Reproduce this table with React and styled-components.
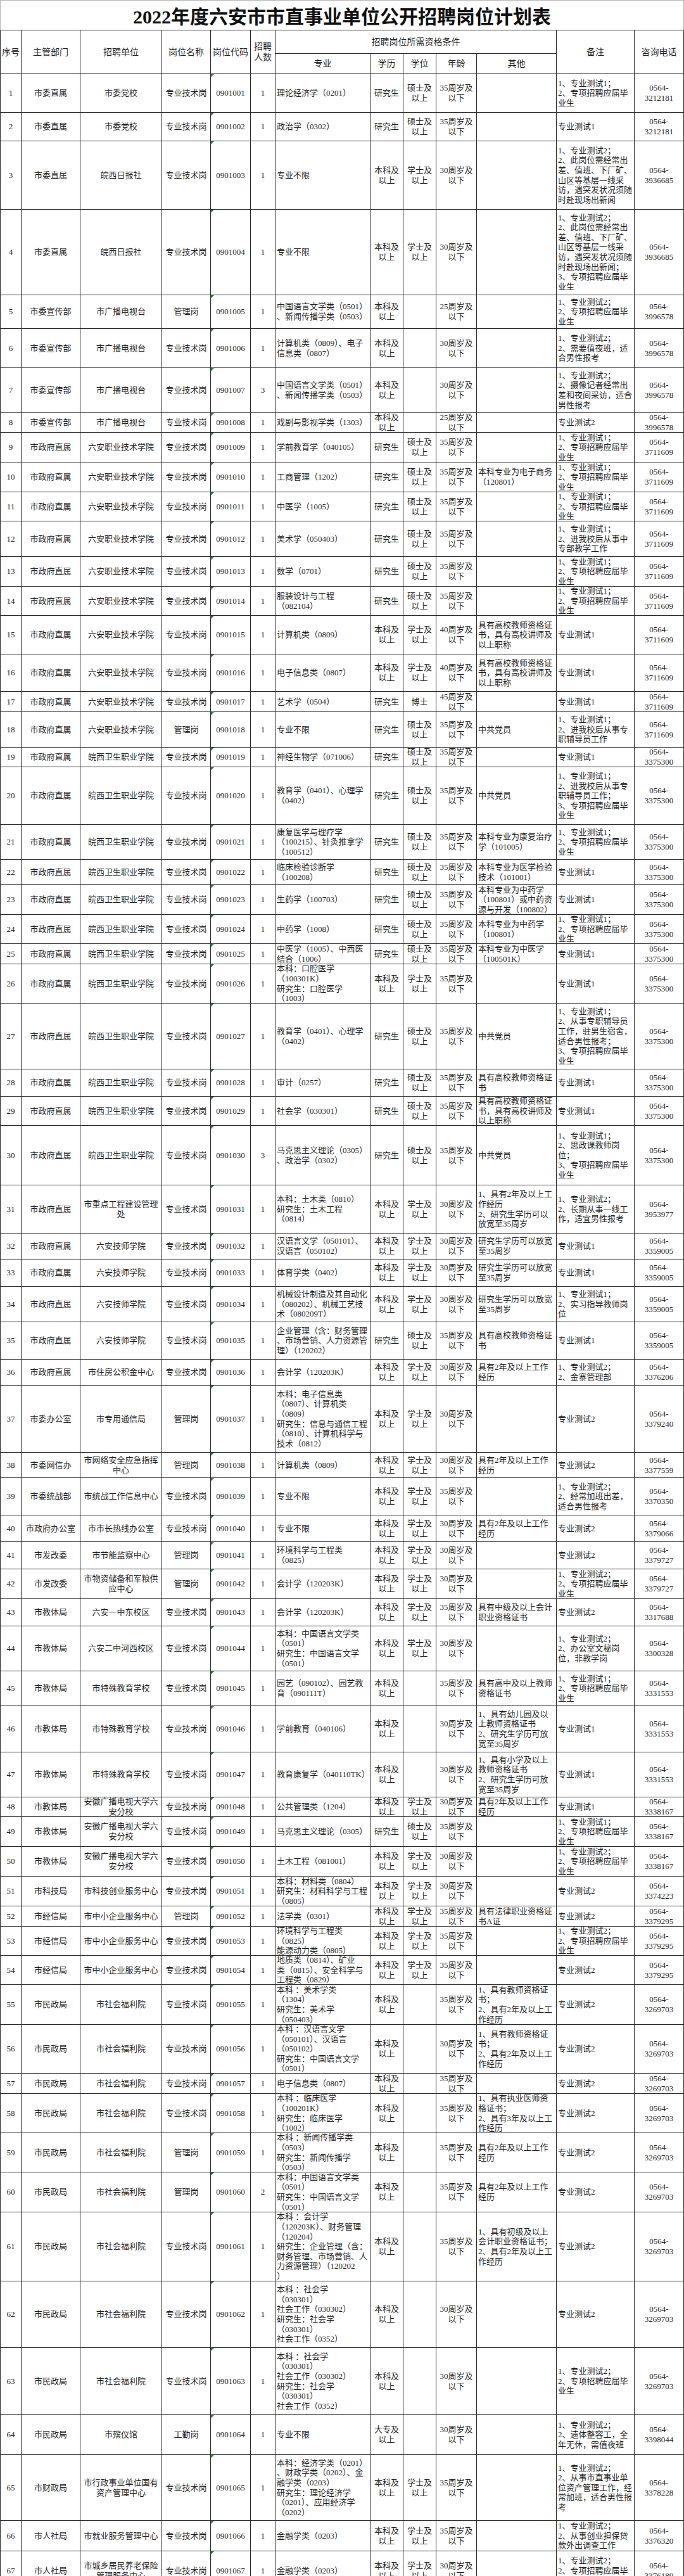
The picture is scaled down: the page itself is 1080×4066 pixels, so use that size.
import React from 'react';
import styled, { createGlobalStyle, css } from 'styled-components';

const COLS = '34px 93px 129px 77px 63px 39px 150px 52px 52px 64px 126px 123px 78px';
const LINE = '#2b2b2b';

const GlobalStyle = createGlobalStyle`
  html, body { margin: 0; padding: 0; background: #fff; }
  body {
    font-family: "Liberation Serif", "Noto Sans CJK SC", serif;
    color: #1f1f1f;
  }
`;

const Sheet = styled.div`
  width: 1080px;
  background: #fff;
`;

const Title = styled.h1`
  margin: 0;
  height: 48px;
  box-sizing: border-box;
  border: 1px solid #b5b5b5;
  border-bottom: 1px solid ${LINE};
  display: flex;
  align-items: center;
  justify-content: center;
  font-family: "Liberation Serif", "Noto Sans CJK SC", serif;
  font-size: 30px;
  font-weight: 700;
  color: #111;
`;

const HeadGrid = styled.div`
  display: grid;
  grid-template-columns: ${COLS};
  grid-template-rows: 37px 32px;
  font-size: 14px;
  line-height: 17px;
`;

const Row = styled.div`
  display: grid;
  grid-template-columns: ${COLS};
  grid-template-rows: ${(p) => p.$h}px;
  font-size: 13px;
  line-height: 15.6px;
`;

const Cell = styled.div`
  box-sizing: border-box;
  display: flex;
  align-items: center;
  justify-content: ${(p) => (p.$left ? 'flex-start' : 'center')};
  padding: 0 2px;
  overflow: hidden;
  position: relative;
  border-right: 1px solid ${LINE};
  border-bottom: 1px solid ${LINE};
  grid-column: ${(p) => p.$col || 'auto'};
  grid-row: ${(p) => p.$row || 'auto'};
  &:first-child {
    border-left: 1px solid ${LINE};
  }
  ${(p) =>
    p.$flag &&
    css`
      &::before {
        content: '';
        position: absolute;
        left: 0;
        top: 0;
        border-top: 5px solid #2f7d32;
        border-right: 5px solid transparent;
      }
    `}
`;

const Text = styled.span`
  white-space: pre;
  text-align: ${(p) => (p.$left ? 'left' : 'center')};
`;

const POST = { T: '专业技术岗', G: '管理岗', Q: '工勤岗' };
const EDU = { Y: '研究生', B: '本科及\n以上', Z: '大专及\n以上' };
const DEG = { S: '硕士及\n以上', X: '学士及\n以上', D: '博士', '': '' };

const N1 = '1、专业测试1；\n2、专项招聘应届毕\n业生';
const N2 = '1、专业测试2；\n2、专项招聘应届毕\n业生';
const T1 = '专业测试1';
const T2 = '专业测试2';
const WORK2 = '具有2年及以上工作\n经历';
const TEACH = '具有高校教师资格证\n书，具有高校讲师及\n以上职称';
const RELAX = '研究生学历可以放宽\n至35周岁';
const NEWS = '1、专业测试2；\n2、此岗位需经常出\n差、值班、下厂矿、\n山区等基层一线采\n访，遇突发状况须随\n时赴现场出新闻';
const MEDIA = '中国语言文学类（0501）\n、新闻传播学类（0503）';
const PSY = '教育学（0401）、心理学\n（0402）';
const TCH2 = '1、具有教师资格证\n书；\n2、具有2年及以上工\n作经历';
const SOC = '本科 ：社会学\n（030301）\n社会工作（030302）\n研究生：社会学\n（030301）\n社会工作（0352）';
const CHN = '本科：中国语言文学类\n（0501）\n研究生：中国语言文学\n（0501）';

const ZY = '六安职业技术学院';
const WX = '皖西卫生职业学院';
const JS = '六安技师学院';
const TX = '市特殊教育学校';
const DD = '安徽广播电视大学六\n安分校';
const FL = '市社会福利院';

// [height, dept, unit, post, num, major, edu, degree, age, other, note, phone]
const rows = [
  [61, '市委直属', '市委党校', 'T', 1, '理论经济学（0201）', 'Y', 'S', 35, '', N1, '3212181'],
  [45, '市委直属', '市委党校', 'T', 1, '政治学（0302）', 'Y', 'S', 35, '', T1, '3212181'],
  [108, '市委直属', '皖西日报社', 'T', 1, '专业不限', 'B', 'X', 30, '', NEWS, '3936685'],
  [135, '市委直属', '皖西日报社', 'T', 1, '专业不限', 'B', 'X', 30, '', NEWS + '；\n3、专项招聘应届毕\n业生', '3936685'],
  [53, '市委宣传部', '市广播电视台', 'G', 1, MEDIA, 'B', '', 25, '', N2, '3996578'],
  [62, '市委宣传部', '市广播电视台', 'T', 1, '计算机类（0809）、电子\n信息类（0807）', 'B', '', 30, '', '1、专业测试2；\n2、需要值夜班，适\n合男性报考', '3996578'],
  [71, '市委宣传部', '市广播电视台', 'T', 3, MEDIA, 'B', '', 30, '', '1、专业测试2；\n2、摄像记者经常出\n差和夜间采访，适合\n男性报考', '3996578'],
  [31, '市委宣传部', '市广播电视台', 'T', 1, '戏剧与影视学类（1303）', 'B', '', 25, '', T2, '3996578'],
  [47, '市政府直属', ZY, 'T', 1, '学前教育学（040105）', 'Y', 'S', 35, '', N1, '3711609'],
  [47, '市政府直属', ZY, 'T', 1, '工商管理（1202）', 'Y', 'S', 35, '本科专业为电子商务\n（120801）', N1, '3711609'],
  [46, '市政府直属', ZY, 'T', 1, '中医学（1005）', 'Y', 'S', 35, '', N1, '3711609'],
  [56, '市政府直属', ZY, 'T', 1, '美术学（050403）', 'Y', 'S', 35, '', '1、专业测试1；\n2、进我校后从事中\n专部教学工作', '3711609'],
  [47, '市政府直属', ZY, 'T', 1, '数学（0701）', 'Y', 'S', 35, '', N1, '3711609'],
  [46, '市政府直属', ZY, 'T', 1, '服装设计与工程\n（082104）', 'Y', 'S', 35, '', N1, '3711609'],
  [61, '市政府直属', ZY, 'T', 1, '计算机类（0809）', 'B', 'X', 40, TEACH, T1, '3711609'],
  [59, '市政府直属', ZY, 'T', 1, '电子信息类（0807）', 'B', 'X', 40, TEACH, T1, '3711609'],
  [32, '市政府直属', ZY, 'T', 1, '艺术学（0504）', 'Y', 'D', 45, '', T1, '3711609'],
  [56, '市政府直属', ZY, 'G', 1, '专业不限', 'Y', 'S', 35, '中共党员', '1、专业测试1；\n2、进我校后从事专\n职辅导员工作', '3711609'],
  [31, '市政府直属', WX, 'T', 1, '神经生物学（071006）', 'Y', 'S', 35, '', T1, '3375300'],
  [91, '市政府直属', WX, 'T', 1, PSY, 'Y', 'S', 35, '中共党员', '1、专业测试1；\n2、进我校后从事专\n职辅导员工作；\n3、专项招聘应届毕\n业生', '3375300'],
  [55, '市政府直属', WX, 'T', 1, '康复医学与理疗学\n（100215）、针灸推拿学\n（100512）', 'Y', 'S', 35, '本科专业为康复治疗\n学（101005）', N1, '3375300'],
  [40, '市政府直属', WX, 'T', 1, '临床检验诊断学\n（100208）', 'Y', 'S', 35, '本科专业为医学检验\n技术（101001）', T1, '3375300'],
  [47, '市政府直属', WX, 'T', 1, '生药学（100703）', 'Y', 'S', 35, '本科专业为中药学\n（100801）或中药资\n源与开发（100802）', T1, '3375300'],
  [46, '市政府直属', WX, 'T', 1, '中药学（1008）', 'Y', 'S', 35, '本科专业为中药学\n（100801）', N1, '3375300'],
  [32, '市政府直属', WX, 'T', 1, '中医学（1005）、中西医\n结合（1006）', 'Y', 'S', 35, '本科专业为中医学\n（100501K）', T1, '3375300'],
  [62, '市政府直属', WX, 'T', 1, '本科：口腔医学\n（100301K）\n研究生：口腔医学\n（1003）', 'B', 'X', 35, '', T1, '3375300'],
  [104, '市政府直属', WX, 'T', 1, PSY, 'Y', 'S', 35, '中共党员', '1、专业测试1；\n2、从事专职辅导员\n工作，驻男生宿舍，\n适合男性报考；\n3、专项招聘应届毕\n业生', '3375300'],
  [43, '市政府直属', WX, 'T', 1, '审计（0257）', 'Y', 'S', 35, '具有高校教师资格证\n书', T1, '3375300'],
  [46, '市政府直属', WX, 'T', 1, '社会学（030301）', 'Y', 'S', 35, TEACH, T1, '3375300'],
  [94, '市政府直属', WX, 'T', 3, '马克思主义理论（0305）\n、政治学（0302）', 'Y', 'S', 35, '中共党员', '1、专业测试1；\n2、思政课教师岗\n位；\n3、专项招聘应届毕\n业生', '3375300'],
  [76, '市政府直属', '市重点工程建设管理\n处', 'T', 1, '本科：土木类（0810）\n研究生：土木工程\n（0814）', 'B', 'X', 30, '1、具有2年及以上工\n作经历\n2、研究生学历可以\n放宽至35周岁', '1、专业测试2；\n2、长期从事一线工\n作，适宜男性报考', '3953977'],
  [41, '市政府直属', JS, 'T', 1, '汉语言文学（050101）、\n汉语言（050102）', 'B', 'X', 30, RELAX, T1, '3359005'],
  [43, '市政府直属', JS, 'T', 1, '体育学类（0402）', 'B', 'X', 30, RELAX, T1, '3359005'],
  [56, '市政府直属', JS, 'T', 1, '机械设计制造及其自动化\n（080202）、机械工艺技\n术（080209T）', 'B', 'X', 30, RELAX, '1、专业测试1；\n2、实习指导教师岗\n位', '3359005'],
  [59, '市政府直属', JS, 'T', 1, '企业管理（含：财务管理\n、市场营销、人力资源管\n理）（120202）', 'Y', 'S', 35, '具有高校教师资格证\n书', T1, '3359005'],
  [41, '市政府直属', '市住房公积金中心', 'T', 1, '会计学（120203K）', 'B', 'X', 30, WORK2, '1、专业测试2；\n2、金寨管理部', '3376206'],
  [106, '市委办公室', '市专用通信局', 'G', 1, '本科：电子信息类\n（0807）、计算机类\n（0809）\n研究生：信息与通信工程\n（0810）、计算机科学与\n技术（0812）', 'B', 'X', 30, '', T2, '3379240'],
  [40, '市委网信办', '市网络安全应急指挥\n中心', 'G', 1, '计算机类（0809）', 'B', 'X', 30, WORK2, T2, '3377559'],
  [59, '市委统战部', '市统战工作信息中心', 'T', 1, '专业不限', 'B', 'X', 35, '', '1、专业测试2；\n2、经常加班出差，\n适合男性报考', '3370350'],
  [42, '市政府办公室', '市市长热线办公室', 'T', 1, '专业不限', 'B', 'X', 30, WORK2, T2, '3379066'],
  [43, '市发改委', '市节能监察中心', 'G', 1, '环境科学与工程类\n（0825）', 'B', 'X', 30, '', T2, '3379727'],
  [47, '市发改委', '市物资储备和军粮供\n应中心', 'G', 1, '会计学（120203K）', 'B', 'X', 30, '', N2, '3379727'],
  [43, '市教体局', '六安一中东校区', 'T', 1, '会计学（120203K）', 'B', 'X', 35, '具有中级及以上会计\n职业资格证书', T2, '3317688'],
  [71, '市教体局', '六安二中河西校区', 'T', 1, CHN, 'B', 'X', 30, '', '1、专业测试2；\n2、办公室文秘岗\n位，非教学岗', '3300328'],
  [55, '市教体局', TX, 'T', 1, '园艺（090102）、园艺教\n育（090111T）', 'B', '', 35, '具有高中及以上教师\n资格证书', N1, '3331553'],
  [73, '市教体局', TX, 'T', 1, '学前教育（040106）', 'B', '', 30, '1、具有幼儿园及以\n上教师资格证书\n2、研究生学历可放\n宽至35周岁', T1, '3331553'],
  [71, '市教体局', TX, 'T', 1, '教育康复学（040110TK）', 'B', '', 30, '1、具有小学及以上\n教师资格证书\n2、研究生学历可放\n宽至35周岁', T1, '3331553'],
  [31, '市教体局', DD, 'T', 1, '公共管理类（1204）', 'B', 'X', 30, WORK2, T1, '3338167'],
  [47, '市教体局', DD, 'T', 1, '马克思主义理论（0305）', 'Y', 'S', 35, '', N1, '3338167'],
  [47, '市教体局', DD, 'T', 1, '土木工程（081001）', 'B', 'X', 30, '', N2, '3338167'],
  [47, '市科技局', '市科技创业服务中心', 'T', 1, '本科：材料类（0804）\n研究生：材料科学与工程\n（0805）', 'B', 'X', 30, '', T2, '3374223'],
  [32, '市经信局', '市中小企业服务中心', 'G', 1, '法学类（0301）', 'B', 'X', 35, '具有法律职业资格证\n书A证', T2, '3379295'],
  [46, '市经信局', '市中小企业服务中心', 'T', 1, '环境科学与工程类\n（0825）\n能源动力类（0805）', 'B', 'X', 35, '', N2, '3379295'],
  [46, '市经信局', '市中小企业服务中心', 'T', 1, '地质类（0814）、矿业\n类（0815）、安全科学与\n工程类（0829）', 'B', 'X', 35, '', T2, '3379295'],
  [63, '市民政局', FL, 'T', 1, '本科 ：美术学类\n（1304）\n研究生：美术学\n（050403）', 'B', '', 35, TCH2, T2, '3269703'],
  [77, '市民政局', FL, 'T', 1, '本科 ：汉语言文学\n（050101）、汉语言\n（050102）\n研究生：中国语言文学\n（0501）', 'B', '', 30, TCH2, T2, '3269703'],
  [32, '市民政局', FL, 'T', 1, '电子信息类（0807）', 'B', '', 35, '', T2, '3269703'],
  [62, '市民政局', FL, 'T', 1, '本科 ：临床医学\n（100201K）\n研究生：临床医学\n（1002）', 'B', '', 35, '1、具有执业医师资\n格证书；\n2、具有3年及以上工\n作经历', T2, '3269703'],
  [62, '市民政局', FL, 'G', 1, '本科 ：新闻传播学类\n（0503）\n研究生：新闻传播学\n（0503）', 'B', '', 35, WORK2, T2, '3269703'],
  [63, '市民政局', FL, 'G', 2, CHN, 'B', '', 35, WORK2, T2, '3269703'],
  [109, '市民政局', FL, 'T', 1, '本科 ：会计学\n（120203K）、财务管理\n（120204）\n研究生：企业管理（含：\n财务管理、市场营销、人\n力资源管理）（120202\n）', 'B', '', 35, '1、具有初级及以上\n会计职业资格证书；\n2、具有2年及以上工\n作经历', T2, '3269703'],
  [105, '市民政局', FL, 'T', 1, SOC, 'B', '', 30, '', T2, '3269703'],
  [106, '市民政局', FL, 'T', 1, SOC, 'B', '', 30, '', N2, '3269703'],
  [63, '市民政局', '市殡仪馆', 'Q', 1, '专业不限', 'Z', '', 30, '', '1、专业测试2；\n2、遗体整容工，全\n年无休，需值夜班', '3398044'],
  [104, '市财政局', '市行政事业单位国有\n资产管理中心', 'T', 1, '本科：经济学类（0201）\n、财政学类（0202）、金\n融学类（0203）\n研究生：理论经济学\n（0201）、应用经济学\n（0202）', 'B', 'X', 35, '', '1、专业测试2；\n2、从事市直事业单\n位资产管理工作，经\n常加班，适合男性报\n考', '3378228'],
  [48, '市人社局', '市就业服务管理中心', 'T', 1, '金融学类（0203）', 'B', 'X', 35, '', '1、专业测试2；\n2、从事创业担保贷\n款外出调查工作', '3376320'],
  [62, '市人社局', '市城乡居民养老保险\n管理服务中心', 'T', 1, '金融学类（0203）', 'B', 'X', 30, '', N2, '3376189'],
];

function Header() {
  const h = [
    ['1', '1 / 3', '序号'],
    ['2', '1 / 3', '主管部门'],
    ['3', '1 / 3', '招聘单位'],
    ['4', '1 / 3', '岗位名称'],
    ['5', '1 / 3', '岗位代码'],
    ['6', '1 / 3', '招聘\n人数'],
    ['7 / 12', '1', '招聘岗位所需资格条件'],
    ['7', '2', '专业'],
    ['8', '2', '学历'],
    ['9', '2', '学位'],
    ['10', '2', '年龄'],
    ['11', '2', '其他'],
    ['12', '1 / 3', '备注'],
    ['13', '1 / 3', '咨询电话'],
  ];
  return (
    <HeadGrid>
      {h.map(([col, row, label]) => (
        <Cell key={label} $col={col} $row={row}>
          <Text>{label}</Text>
        </Cell>
      ))}
    </HeadGrid>
  );
}

function JobRow({ no, data }) {
  const [h, dept, unit, post, num, major, edu, deg, age, other, note, phone] = data;
  const code = `09010${String(no).padStart(2, '0')}`;
  return (
    <Row $h={h}>
      <Cell><Text>{no}</Text></Cell>
      <Cell><Text>{dept}</Text></Cell>
      <Cell><Text>{unit}</Text></Cell>
      <Cell><Text>{POST[post]}</Text></Cell>
      <Cell $flag><Text>{code}</Text></Cell>
      <Cell><Text>{num}</Text></Cell>
      <Cell $left><Text $left>{major}</Text></Cell>
      <Cell><Text>{EDU[edu]}</Text></Cell>
      <Cell><Text>{DEG[deg]}</Text></Cell>
      <Cell><Text>{`${age}周岁及\n以下`}</Text></Cell>
      <Cell $left><Text $left>{other}</Text></Cell>
      <Cell $left><Text $left>{note}</Text></Cell>
      <Cell><Text>{`0564-\n${phone}`}</Text></Cell>
    </Row>
  );
}

export default function App() {
  return (
    <>
      <GlobalStyle />
      <Sheet>
        <Title>2022年度六安市市直事业单位公开招聘岗位计划表</Title>
        <Header />
        {rows.map((r, i) => (
          <JobRow key={i} no={i + 1} data={r} />
        ))}
      </Sheet>
    </>
  );
}
